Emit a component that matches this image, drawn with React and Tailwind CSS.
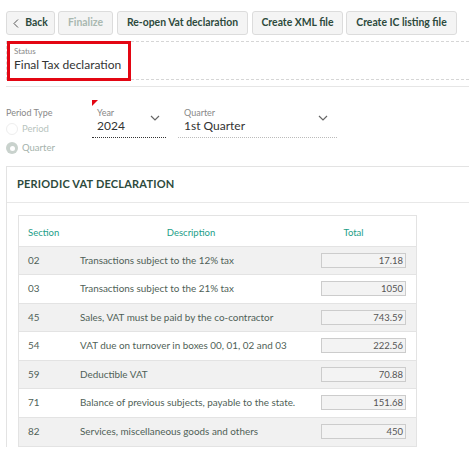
import React from 'react';

const rows = [
    { section: '02', description: 'Transactions subject to the 12% tax', total: '17.18' },
    { section: '03', description: 'Transactions subject to the 21% tax', total: '1050' },
    { section: '45', description: 'Sales, VAT must be paid by the co-contractor', total: '743.59' },
    { section: '54', description: 'VAT due on turnover in boxes 00, 01, 02 and 03', total: '222.56' },
    { section: '59', description: 'Deductible VAT', total: '70.88' },
    { section: '71', description: 'Balance of previous subjects, payable to the state.', total: '151.68' },
    { section: '82', description: 'Services, miscellaneous goods and others', total: '450' },
];

const ToolButton = ({ children, disabled, width }) => (
    <button
        className={`${width} h-[24px] rounded-[3px] border border-[#dcdcdc] bg-[#f4f4f4] text-[10.4px] font-bold whitespace-nowrap flex items-center justify-center gap-[6px] ${disabled ? 'text-[#a9b8b0]' : 'text-[#2d4a3c]'}`}
    >
        {children}
    </button>
);

const Chevron = () => (
    <svg width="10" height="6" viewBox="0 0 10 6" fill="none" stroke="#666" strokeWidth="1.2">
        <path d="M1 1l4 4 4-4" />
    </svg>
);

const App = () => {
    return (
        <div className="w-[469px] h-[454px] overflow-hidden bg-white text-[#444]" style={{ fontFamily: 'Lato, "Noto Sans", sans-serif' }}>
            <div className="flex pt-[11px] pl-[6px]">
                <ToolButton width="w-[49px]">
                    <svg width="6" height="9" viewBox="0 0 6 9" fill="none" stroke="#555" strokeWidth="1">
                        <path d="M5 0.5L1 4.5l4 4" />
                    </svg>
                    Back
                </ToolButton>
                <div className="w-[3px]"></div>
                <ToolButton width="w-[55px]" disabled>Finalize</ToolButton>
                <div className="w-[4px]"></div>
                <ToolButton width="w-[131px]">Re-open Vat declaration</ToolButton>
                <div className="w-[4px]"></div>
                <ToolButton width="w-[91px]">Create XML file</ToolButton>
                <div className="w-[3px]"></div>
                <ToolButton width="w-[111px]">Create IC listing file</ToolButton>
            </div>

            <div className="ml-[6px] mt-[6px] h-[39px] border-y border-l border-dashed border-[#d6d6d6]">
                <div className="w-[124px] h-[40px] -mt-px border-[3px] border-[#e30613] pl-[4px] pt-[2px]">
                    <div className="text-[8px] text-[#888] leading-[10px]">Status</div>
                    <div className="text-[12px] text-[#333] leading-[15px] mt-px">Final Tax declaration</div>
                </div>
            </div>
            <div className="ml-[6px] mt-[6px] border-t border-[#e6e6e6]"></div>

            <div className="flex mt-[13px] pl-[6px]">
                <div className="w-[86px]">
                    <div className="text-[9px] text-[#888] mt-[7px] leading-[11px]">Period Type</div>
                    <div className="flex items-center gap-[4px] mt-[4px] text-[9.5px] text-[#b8c4be]">
                        <span className="w-[12px] h-[12px] rounded-full border border-[#eee] bg-white"></span>
                        Period
                    </div>
                    <div className="flex items-center gap-[4px] mt-[5px] text-[9.5px] text-[#a4b2ab]">
                        <span className="w-[12px] h-[12px] rounded-full bg-[#c9d2cd] flex items-center justify-center">
                            <span className="w-[5px] h-[5px] rounded-full bg-white"></span>
                        </span>
                        Quarter
                    </div>
                </div>

                <div className="relative w-[74px] h-[38px] border-b border-dotted border-[#333] pl-[5px]">
                    <div className="absolute left-0 top-0 w-0 h-0 border-t-[6px] border-r-[6px] border-t-[#e30613] border-r-transparent"></div>
                    <div className="text-[9px] text-[#888] mt-[7px] leading-[11px]">Year</div>
                    <div className="flex items-start justify-between pr-[6px]">
                        <span className="text-[12px] text-[#333] leading-[15px]">2024</span>
                        <span className="-mt-[3px]"><Chevron /></span>
                    </div>
                </div>

                <div className="w-[159px] ml-[12px] h-[38px] border-b border-dotted border-[#bbb] pl-[6px]">
                    <div className="text-[9px] text-[#888] mt-[7px] leading-[11px]">Quarter</div>
                    <div className="flex items-start justify-between pr-[9px]">
                        <span className="text-[12px] text-[#333] leading-[15px]">1st Quarter</span>
                        <span className="-mt-[3px]"><Chevron /></span>
                    </div>
                </div>
            </div>

            <div className="ml-[6px] mt-[10px] border-t border-l border-[#e3e3e3]">
                <div className="h-[36px] flex items-center pl-[10px] border-b border-[#e8e8e8]">
                    <span className="text-[11px] font-bold text-[#2d4a3c] tracking-[0.2px]">PERIODIC VAT DECLARATION</span>
                </div>

                <div className="ml-[11px] mt-[12px] w-[399px] border border-[#e3e3e3]">
                    <div className="h-[31px] pt-[5px] flex items-center text-[9.5px] text-[#1d9e88] border-b border-[#e3e3e3]">
                        <div className="w-[62px] pl-[9px]">Section</div>
                        <div className="w-[220px] text-center">Description</div>
                        <div className="flex-1 text-center pr-[10px]">Total</div>
                    </div>
                    {rows.map((row, i) => (
                        <div
                            key={row.section}
                            className={`h-[28.5px] flex items-center text-[9.9px] text-[#4f5f57] border-b border-[#e3e3e3] last:border-b-0 ${i % 2 === 0 ? 'bg-[#f1f1f1]' : 'bg-white'}`}
                        >
                            <div className="w-[61px] pl-[9px]">{row.section}</div>
                            <div className="flex-1 whitespace-nowrap">{row.description}</div>
                            <div className="w-[85px] h-[15px] mr-[10px] border border-[#ccc] bg-[#f3f3f3] text-right pr-[2px] leading-[13px] text-[9.5px] text-[#555]">
                                {row.total}
                            </div>
                        </div>
                    ))}
                </div>
            </div>
        </div>
    );
};

export default App;
